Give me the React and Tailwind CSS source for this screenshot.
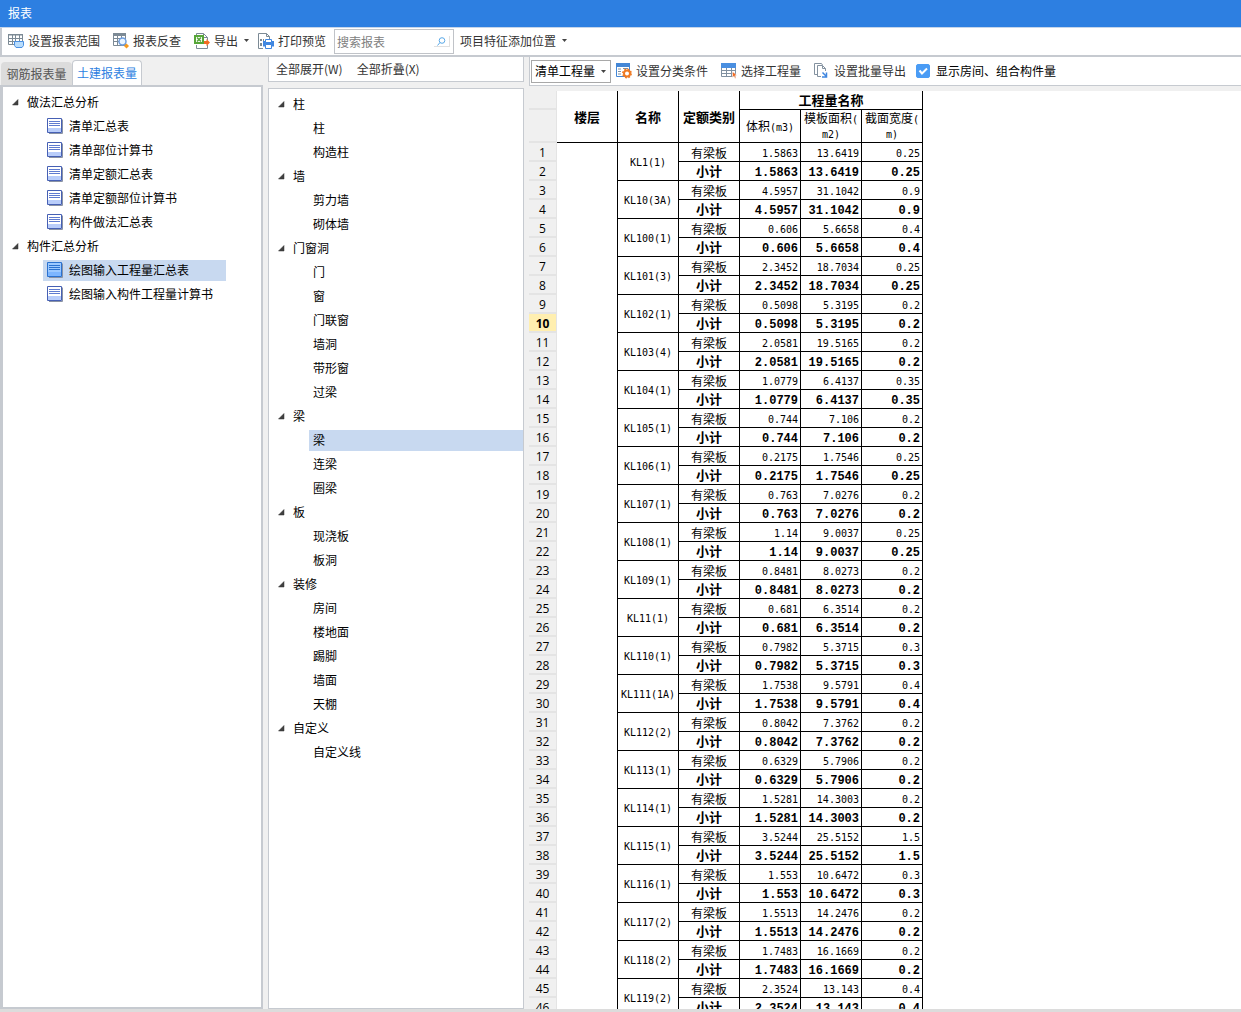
import { Fragment, useState } from "react";

const leftTree = [
  {
    title: "做法汇总分析",
    items: ["清单汇总表", "清单部位计算书", "清单定额汇总表", "清单定额部位计算书", "构件做法汇总表"],
  },
  {
    title: "构件汇总分析",
    items: ["绘图输入工程量汇总表", "绘图输入构件工程量计算书"],
  },
];

const componentTree = [
  { title: "柱", items: ["柱", "构造柱"] },
  { title: "墙", items: ["剪力墙", "砌体墙"] },
  { title: "门窗洞", items: ["门", "窗", "门联窗", "墙洞", "带形窗", "过梁"] },
  { title: "梁", items: ["梁", "连梁", "圈梁"] },
  { title: "板", items: ["现浇板", "板洞"] },
  { title: "装修", items: ["房间", "楼地面", "踢脚", "墙面", "天棚"] },
  { title: "自定义", items: ["自定义线"] },
];

// name, volume, formwork area, section width
const beams = [
  ["KL1(1)", "1.5863", "13.6419", "0.25"],
  ["KL10(3A)", "4.5957", "31.1042", "0.9"],
  ["KL100(1)", "0.606", "5.6658", "0.4"],
  ["KL101(3)", "2.3452", "18.7034", "0.25"],
  ["KL102(1)", "0.5098", "5.3195", "0.2"],
  ["KL103(4)", "2.0581", "19.5165", "0.2"],
  ["KL104(1)", "1.0779", "6.4137", "0.35"],
  ["KL105(1)", "0.744", "7.106", "0.2"],
  ["KL106(1)", "0.2175", "1.7546", "0.25"],
  ["KL107(1)", "0.763", "7.0276", "0.2"],
  ["KL108(1)", "1.14", "9.0037", "0.25"],
  ["KL109(1)", "0.8481", "8.0273", "0.2"],
  ["KL11(1)", "0.681", "6.3514", "0.2"],
  ["KL110(1)", "0.7982", "5.3715", "0.3"],
  ["KL111(1A)", "1.7538", "9.5791", "0.4"],
  ["KL112(2)", "0.8042", "7.3762", "0.2"],
  ["KL113(1)", "0.6329", "5.7906", "0.2"],
  ["KL114(1)", "1.5281", "14.3003", "0.2"],
  ["KL115(1)", "3.5244", "25.5152", "1.5"],
  ["KL116(1)", "1.553", "10.6472", "0.3"],
  ["KL117(2)", "1.5513", "14.2476", "0.2"],
  ["KL118(2)", "1.7483", "16.1669", "0.2"],
  ["KL119(2)", "2.3524", "13.143", "0.4"],
];

const GridIcon = () => (
  <svg className="h-4 w-4 shrink-0" viewBox="0 0 16 16" fill="none">
    <path d="M0.5 1.5h14v10h-14z M0.5 5.5h14 M0.5 8.5h14 M4.5 1v11 M7.5 1v11 M11.5 1v11" stroke="#7c8a95" />
    <path d="M0 1h15v1.500H0z" fill="#7c8a95" />
    <path d="M6.500 8.500h9v4l-1.500 2h-6l-1.500-2z" fill="#b9dcfb" stroke="#4a90e2" />
  </svg>
);

const LookupIcon = () => (
  <svg className="h-4 w-4 shrink-0" viewBox="0 0 16 16" fill="none">
    <path d="M0.500 0.500h12v12h-12z M0.500 5.500h12 M0.500 8.500h12 M4.500 1v12 M8.500 1v12" stroke="#7c8a95" />
    <path d="M0 0h13v3H0z" fill="#7c8a95" />
    <circle cx="9.500" cy="8.500" r="3.500" fill="#eaf5ff" stroke="#6f9ede" strokeWidth="1.500" />
    <path d="M13.500 10.500l2.500 2.500-2.500 2.500-2.500-2.500z" fill="#f79a1e" />
  </svg>
);

const ExportIcon = () => (
  <svg className="h-4 w-4 shrink-0" viewBox="0 0 16 16" fill="none">
    <path d="M2.500 2V0.500h7l4 4V7 M2.500 12v3.500h11V12 M9.500 0.500v4h4" stroke="#7c8a95" />
    <path d="M1 3h8v7H1z" fill="#fff" stroke="#57a639" strokeWidth="2" />
    <path d="M3 4.500l4 4M7 4.500l-4 4" stroke="#57a639" strokeWidth="1.500" />
    <path d="M10 8h2.500V6l3.500 3.500-3.500 3.500v-2H10z" fill="#f26b21" />
  </svg>
);

const PrintIcon = () => (
  <svg className="h-4 w-4 shrink-0" viewBox="0 0 16 16" fill="none">
    <path d="M5 15.500H0.500v-15h8l3 3V6 M8.500 0.500v3h3" stroke="#7c8a95" />
    <path d="M2 6h2v2H2z M5 6h1v2H5z M2 10h2v3H2z" fill="#7c8a95" />
    <path d="M5 8h11v5.500H5z" fill="#3f86e0" />
    <path d="M7.500 6.500h6v3h-6z M7.500 11.500h6v4h-6z" fill="#fff" stroke="#3f86e0" />
  </svg>
);

const ClassifyIcon = () => (
  <svg className="h-4 w-4 shrink-0" viewBox="0 0 16 16" fill="none">
    <path d="M0.500 0.500h13v13h-13z" fill="#fff" stroke="#4487d6" />
    <path d="M0 0h14v4H0z" fill="#4487d6" />
    <path d="M2 6h3M2 8.500h3M2 11h3M7 5.500h5" stroke="#8090a0" />
    <circle cx="11" cy="10.500" r="3" fill="#fff" stroke="#f07a22" strokeWidth="2" />
    <circle cx="11" cy="10.500" r="4.200" stroke="#f07a22" strokeWidth="1.500" strokeDasharray="1.800 1.500" />
  </svg>
);

const PickIcon = () => (
  <svg className="h-4 w-4 shrink-0" viewBox="0 0 16 16" fill="none">
    <path d="M0.500 1.500h14v12h-14z M0.500 7.500h14 M0.500 10.500h14 M5.500 4v10 M10.500 4v10" stroke="#8090a0" />
    <path d="M0 0h15v5H0z" fill="#4a8fe0" />
    <path d="M11.500 8.500l4.500 4h-2l1 2.500-1 0.500-1-2.500-1.500 1.500z" fill="#f26b21" stroke="#fff" strokeWidth="0.500" />
  </svg>
);

const BatchIcon = () => (
  <svg className="h-4 w-4 shrink-0" viewBox="0 0 16 16" fill="none">
    <path d="M3 11.500H0.500v-11h7l1 1.500 M7 13.500H3.500v-11h5l3 3V8 M8.500 2.500v3h3" stroke="#8492a0" />
    <path d="M8.500 9.500l4 4M12.500 9.500v4.500H8" stroke="#3f86e0" strokeWidth="1.500" />
  </svg>
);

const SheetIcon = ({ active }) => (
  <svg className="h-4 w-4 shrink-0" viewBox="0 0 16 16" fill="none">
    <path d="M2 15.500h13.500V1.500" stroke="#8a93a5" />
    <path d="M0.500 0.500h14v14h-14z" fill={active ? "#9cc9ff" : "#fff"} stroke={active ? "#2b72d0" : "#4660b4"} />
    <path d="M1 10h13v4H1z" fill={active ? "#7db6ff" : "#b9cdfa"} />
    <path d="M2 3.500h11M2 5.500h11M2 7.500h11" stroke={active ? "#2b72d0" : "#5f7bd0"} />
  </svg>
);

const TreeArrow = () => (
  <svg className="h-[7px] w-[7px] shrink-0" viewBox="0 0 7 7">
    <path d="M6 0.500v5.500H0.500z" fill="#404040" stroke="#333" strokeWidth="0.500" />
  </svg>
);

const Caret = () => (
  <svg className="h-[3px] w-[5px] shrink-0" viewBox="0 0 5 3">
    <path d="M0 0h5L2.500 3z" fill="#444" />
  </svg>
);

function ToolButton({ icon, children, caret }) {
  return (
    <button type="button" className="flex h-5 shrink-0 items-center whitespace-nowrap text-[#333]">
      {icon}
      <span className={icon ? "ml-1" : ""}>{children}</span>
      {caret && (
        <span className="-mr-1 ml-1.5">
          <Caret />
        </span>
      )}
    </button>
  );
}

function TreeGroup({ title, children }) {
  return (
    <li>
      <div className="flex h-6 items-center gap-2 pl-[9px]">
        <TreeArrow />
        <span>{title}</span>
      </div>
      <ul>{children}</ul>
    </li>
  );
}

function ReportTree() {
  const [selected, setSelected] = useState("绘图输入工程量汇总表");
  return (
    <ul className="pt-[3px]">
      {leftTree.map((group) => (
        <TreeGroup key={group.title} title={group.title}>
          {group.items.map((item) => (
            <li key={item} className="flex h-6 items-center pl-10">
              <button
                type="button"
                onClick={() => setSelected(item)}
                className={`flex h-[21px] w-[183px] items-center gap-1.5 whitespace-nowrap pl-1 ${
                  selected === item ? "bg-[#c8d9f0]" : ""
                }`}
              >
                <SheetIcon active={selected === item} />
                {item}
              </button>
            </li>
          ))}
        </TreeGroup>
      ))}
    </ul>
  );
}

function ComponentTree() {
  const [selected, setSelected] = useState("梁");
  return (
    <ul className="pt-[3px]">
      {componentTree.map((group) => (
        <TreeGroup key={group.title} title={group.title}>
          {group.items.map((item) => (
            <li key={item} className="flex h-6 items-center pl-10">
              <button
                type="button"
                onClick={() => setSelected(item)}
                className={`h-[21px] flex-1 pl-1 text-left ${selected === item ? "bg-[#c8d9f0]" : ""}`}
              >
                {item}
              </button>
            </li>
          ))}
        </TreeGroup>
      ))}
    </ul>
  );
}

const headCell = "border-r border-b border-black p-0 pt-0.5 text-center text-[13px] leading-4 font-bold";
const subHeadCell = "border-r border-b border-black p-0 pt-0.5 text-center text-[12px] leading-[14px] font-normal";
const bodyCell = "border-r border-b border-black p-0 pt-1 leading-[14px]";
const nameCell = "border-r border-b border-black p-0 pt-0.5 text-center text-[10px] leading-[14px]";
const numberCell = "border-r border-b-2 border-[#e4e4e4] p-0";
const mono = "font-['DejaVu_Sans_Mono','Noto_Sans_CJK_SC',monospace]";
const monoBold = "font-['Liberation_Mono','Noto_Sans_CJK_SC',monospace] font-bold";

function RowNumber({ value }) {
  return (
    <th
      scope="row"
      className={`${numberCell} pt-0.5 font-['Open_Sans',sans-serif] text-[12px] leading-[15px] ${
        value === 10 ? "bg-[#ffefb0] font-bold" : "bg-[#f0f0f0] font-normal"
      }`}
    >
      {value}
    </th>
  );
}

function QuantityTable() {
  return (
    <table className={`w-[394px] table-fixed border-separate border-spacing-0 ${mono} text-black`}>
      <colgroup>
        <col className="w-7" />
        <col className="w-[61px]" />
        <col className="w-[61px]" />
        <col className="w-[61px]" />
        <col className="w-[61px]" />
        <col className="w-[61px]" />
        <col className="w-[61px]" />
      </colgroup>
      <thead>
        <tr className="h-[19px]">
          <td className={`${numberCell} bg-[#f0f0f0]`} />
          <th rowSpan={2} className={headCell}>楼层</th>
          <th rowSpan={2} className={headCell}>名称</th>
          <th rowSpan={2} className={headCell}>定额类别</th>
          <th colSpan={3} className={headCell}>工程量名称</th>
        </tr>
        <tr className="h-[33px]">
          <td className={`${numberCell} bg-[#f0f0f0]`} />
          <th className={subHeadCell}>
            体积<span className="text-[10px]">(m3)</span>
          </th>
          <th className={subHeadCell}>
            模板面积<span className="text-[10px]">(<br />m2)</span>
          </th>
          <th className={subHeadCell}>
            截面宽度<span className="text-[10px]">(<br />m)</span>
          </th>
        </tr>
      </thead>
      <tbody>
        {beams.map(([name, ...values], i) => (
          <Fragment key={name}>
            <tr className="h-[19px]">
              <RowNumber value={i * 2 + 1} />
              {i === 0 && <td rowSpan={beams.length * 2} className="border-r border-black" />}
              <td rowSpan={2} className={nameCell}>{name}</td>
              <td className={`${bodyCell} text-center text-[12px]`}>有梁板</td>
              {values.map((value, n) => (
                <td key={n} className={`${bodyCell} pr-0.5 text-right text-[10px]`}>{value}</td>
              ))}
            </tr>
            <tr className={`h-[19px] ${monoBold}`}>
              <RowNumber value={i * 2 + 2} />
              <td className={`${bodyCell} text-center text-[13px]`}>小计</td>
              {values.map((value, n) => (
                <td key={n} className={`${bodyCell} pr-0.5 text-right text-[12px]`}>{value}</td>
              ))}
            </tr>
          </Fragment>
        ))}
      </tbody>
    </table>
  );
}

export default function App() {
  const [showRooms, setShowRooms] = useState(true);

  return (
    <div className="flex h-screen flex-col overflow-hidden bg-[#f0f0f0] font-['Noto_Sans_CJK_SC',sans-serif] text-[12px] leading-[18px] text-black">
      <header className="flex h-7 shrink-0 items-center border-b border-[#c5d5ea] bg-[#2d7fe1] pb-0.5 pl-2 text-white">
        <h1>报表</h1>
      </header>

      <div className="flex h-[29px] shrink-0 items-center border-b-2 border-l-2 border-[#c6cad0] bg-white pl-1.5">
        <div className="flex items-center gap-[13px] pb-0.5">
          <ToolButton icon={<GridIcon />}>设置报表范围</ToolButton>
          <ToolButton icon={<LookupIcon />}>报表反查</ToolButton>
          <ToolButton icon={<ExportIcon />} caret>导出</ToolButton>
          <ToolButton icon={<PrintIcon />}>打印预览</ToolButton>
        </div>
        <label className="ml-2 flex h-[25px] w-[120px] shrink-0 items-center border border-[#c0c3c8] bg-white px-0.5">
          <input
            type="text"
            placeholder="搜索报表"
            aria-label="搜索报表"
            className="min-w-0 flex-1 outline-none placeholder:text-[#808080]"
          />
          <span className="mr-px flex h-[11px] w-4 items-center justify-center border-r border-b border-[#e0e0e0]">
            <svg className="h-[9px] w-[9px]" viewBox="0 0 9 9" fill="none" stroke="#5aa9e8">
              <circle cx="5" cy="3.500" r="2.800" />
              <path d="M3 5.500L0.500 8.500" />
            </svg>
          </span>
        </label>
        <div className="ml-1.5 pb-0.5">
          <ToolButton caret>项目特征添加位置</ToolButton>
        </div>
      </div>

      <main className="flex min-h-0 flex-1">
        <section className="flex w-[263px] shrink-0 flex-col">
          <div className="flex shrink-0 items-end pt-[3px] pl-px" role="tablist">
            <button type="button" role="tab" aria-selected="false" className="h-[23px] w-[71px] rounded-t bg-[#dcdcdc] text-[#555]">
              钢筋报表量
            </button>
            <button type="button" role="tab" aria-selected="true" className="h-[25px] w-[70px] rounded-t border border-b-0 border-[#c6cad0] bg-white text-[#2d7fe1]">
              土建报表量
            </button>
          </div>
          <div className="min-h-0 flex-1 overflow-hidden border-2 border-l-3 border-[#c6cad0] bg-white">
            <ReportTree />
          </div>
        </section>

        <section className="ml-[5px] flex w-64 shrink-0 flex-col">
          <div className="flex h-[25px] shrink-0 items-center gap-3.5 border border-t-0 border-[#c6cad0] bg-white pl-[7px]">
            <ToolButton>全部展开(W)</ToolButton>
            <ToolButton>全部折叠(X)</ToolButton>
          </div>
          <div className="mt-1.5 min-h-0 flex-1 overflow-hidden border border-[#c6cad0] bg-white">
            <ComponentTree />
          </div>
        </section>

        <section className="ml-[5px] flex min-w-0 flex-1 flex-col">
          <div className="flex h-[29px] shrink-0 items-center border-b border-l border-[#c6cad0] bg-white pl-px">
            <button type="button" className="flex h-[23px] w-20 shrink-0 items-center justify-between border border-[#a8a8a8] bg-white pr-1 pl-[3px]">
              清单工程量
              <Caret />
            </button>
            <div className="ml-[5px] flex items-center gap-[13px]">
              <ToolButton icon={<ClassifyIcon />}>设置分类条件</ToolButton>
              <ToolButton icon={<PickIcon />}>选择工程量</ToolButton>
              <ToolButton icon={<BatchIcon />}>设置批量导出</ToolButton>
            </div>
            <label className="ml-2.5 flex shrink-0 items-center gap-1.5">
              <span className="grid h-3.5 w-3.5">
                <input
                  type="checkbox"
                  checked={showRooms}
                  onChange={(e) => setShowRooms(e.target.checked)}
                  className="peer col-start-1 row-start-1 h-3.5 w-3.5 appearance-none rounded-xs border border-[#4a9cf5] checked:bg-[#4a9cf5]"
                />
                <svg className="pointer-events-none invisible col-start-1 row-start-1 peer-checked:visible" viewBox="0 0 14 14" fill="none">
                  <path d="M3.500 6.500l2.500 3 5-5" stroke="#fff" strokeWidth="2" />
                </svg>
              </span>
              显示房间、组合构件量
            </label>
          </div>
          <div className="mt-[5px] min-h-0 flex-1 overflow-hidden bg-white">
            <QuantityTable />
          </div>
        </section>
      </main>

      <footer className="h-[3px] shrink-0 bg-[#dcdcdc]" />
    </div>
  );
}
